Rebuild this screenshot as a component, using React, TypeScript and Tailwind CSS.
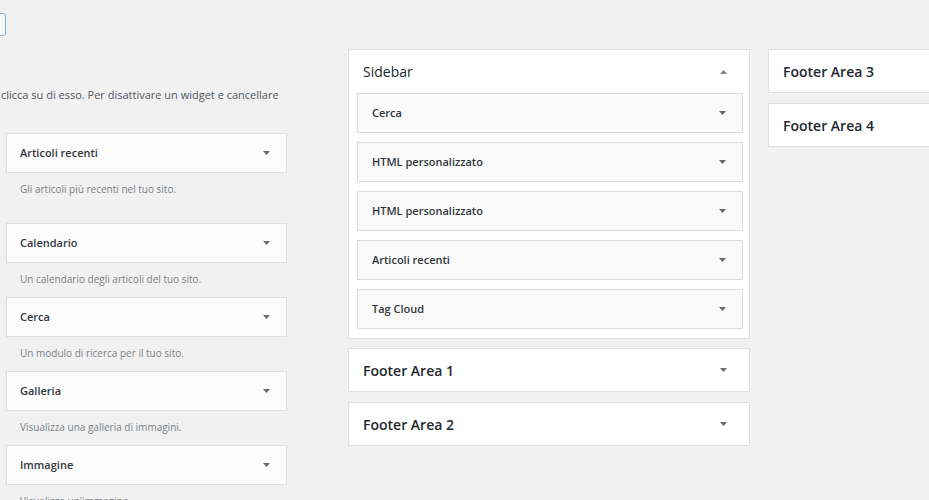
import React from "react";

function Down() {
  return (
    <svg width="7" height="4" viewBox="0 0 7 4" className="shrink-0">
      <polygon points="0,0 7,0 3.5,4" fill="#646a70" />
    </svg>
  );
}

function Up() {
  return (
    <svg width="7" height="4" viewBox="0 0 7 4" className="shrink-0">
      <polygon points="0,4 7,4 3.5,0" fill="#7c8288" />
    </svg>
  );
}

const available = [
  { name: "Articoli recenti", desc: "Gli articoli più recenti nel tuo sito.", extra: true },
  { name: "Calendario", desc: "Un calendario degli articoli del tuo sito." },
  { name: "Cerca", desc: "Un modulo di ricerca per il tuo sito." },
  { name: "Galleria", desc: "Visualizza una galleria di immagini." },
  { name: "Immagine", desc: "Visualizza un'immagine." },
];

const sidebarWidgets = ["Cerca", "HTML personalizzato", "HTML personalizzato", "Articoli recenti", "Tag Cloud"];

export default function App() {
  return (
    <div className="w-[929px] h-[500px] overflow-hidden bg-[#f1f1f1] flex items-start font-['Open_Sans',sans-serif] text-[#23282d]">
      {/* Left column: available widgets */}
      <div className="w-[287px] shrink-0">
        <div className="mt-[13px] -ml-[60px] w-[66px] h-[23px] rounded-[3px] border border-[#7fb0d6] bg-[#f7f9fb]" />
        <p className="mt-[51px] h-[16px] leading-[16px] text-[11px] text-[#50575e] whitespace-nowrap pl-[1px]">
          clicca su di esso. Per disattivare un widget e cancellare
        </p>
        <div className="mt-[30px] pl-[6px]">
          {available.map((w, i) => (
            <div key={i} className={w.extra ? "pb-[16px]" : ""}>
              <div className="h-[40px] border border-[#dfdfdf] bg-[#fcfcfc] flex items-center justify-between pl-[13px] pr-[16px]">
                <span className="text-[11px] font-semibold text-[#32373c]">{w.name}</span>
                <Down />
              </div>
              <p className="pt-[9px] pb-[11px] leading-[14px] text-[10px] text-[#7a7f85] pl-[14px] whitespace-nowrap">
                {w.desc}
              </p>
            </div>
          ))}
        </div>
      </div>

      {/* Middle column */}
      <div className="ml-[61px] w-[402px] shrink-0 mt-[49px]">
        <div className="border border-[#e0e0e0] bg-white">
          <div className="h-[43px] flex items-center justify-between pl-[14px] pr-[22px]">
            <span className="text-[14px] font-medium text-[#23282d]">Sidebar</span>
            <Up />
          </div>
          <div className="pl-[8px] pr-[6px] pb-[9px] flex flex-col gap-[9px]">
            {sidebarWidgets.map((n, i) => (
              <div
                key={i}
                className="h-[40px] shrink-0 border border-[#dcdcdc] bg-[#fafafa] flex items-center justify-between pl-[14px] pr-[16px]"
              >
                <span className="text-[11px] font-semibold text-[#32373c]">{n}</span>
                <Down />
              </div>
            ))}
          </div>
        </div>
        <div className="mt-[9px] h-[44px] border border-[#e0e0e0] bg-white flex items-center justify-between pl-[14px] pr-[22px]">
          <span className="text-[14px] font-semibold text-[#23282d]">Footer Area 1</span>
          <Down />
        </div>
        <div className="mt-[10px] h-[44px] border border-[#e0e0e0] bg-white flex items-center justify-between pl-[14px] pr-[22px]">
          <span className="text-[14px] font-semibold text-[#23282d]">Footer Area 2</span>
          <Down />
        </div>
      </div>

      {/* Right column */}
      <div className="ml-[18px] w-[220px] shrink-0 mt-[49px]">
        <div className="h-[44px] border border-[#e0e0e0] bg-white flex items-center pl-[14px]">
          <span className="text-[14px] font-semibold text-[#23282d]">Footer Area 3</span>
        </div>
        <div className="mt-[10px] h-[44px] border border-[#e0e0e0] bg-white flex items-center pl-[14px]">
          <span className="text-[14px] font-semibold text-[#23282d]">Footer Area 4</span>
        </div>
      </div>
    </div>
  );
}
